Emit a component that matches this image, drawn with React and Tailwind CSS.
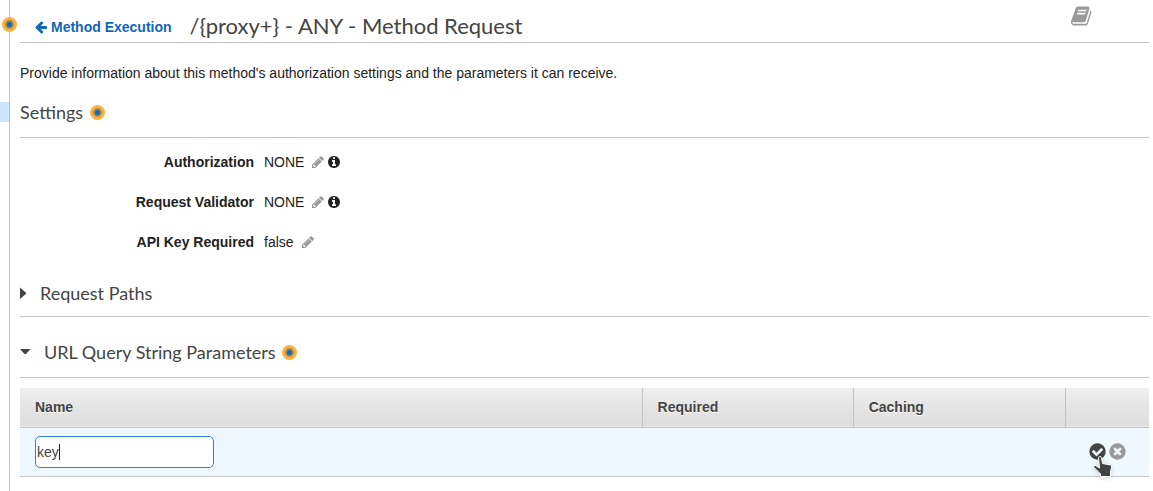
import { useState } from "react";

const DISC = "q0 209-103 385.5t-279.5 279.5-385.5 103-385.5-103-279.5-279.5-103-385.5 103-385.5 279.5-279.5 385.5-103 385.5 103 279.5 279.5 103 385.5z";

const ICONS = {
  arrowLeft: "M1664 896v128q0 53-32.5 90.5t-84.5 37.5h-704l293 294q38 36 38 90t-38 90l-75 76q-37 37-90 37-52 0-91-37l-651-652q-37-37-37-90 0-52 37-91l651-650q38-38 91-38 52 0 90 38l75 74q38 38 38 91t-38 91l-293 293h704q52 0 84.5 37.5t32.5 90.5z",
  book: "M1639 478q40 57 18 129l-275 906q-19 64-76.5 107.5t-122.5 43.5h-923q-77 0-148.5-53.5t-99.5-131.5q-24-67-2-127 0-4 3-27t4-37q1-8-3-21.5t-3-19.5q2-11 8-21t16.5-23.5 16.5-23.5q23-38 45-91.5t30-91.5q3-10 .5-30t-.5-28q3-11 17-28t17-23q21-36 42-92t25-90q1-9-2.5-32t.5-28q4-13 22-30.5t22-22.5q19-26 42.5-84.5t27.5-96.5q1-8-3-25.5t-2-26.5q2-8 9-18t18-23 17-21q8-12 16.5-30.5t15-35 16-36 19.5-32 26.5-23.5 36-11.5 47.5 5.5l-1 3q38-9 51-9h761q74 0 114 56t18 130l-274 906q-36 119-71.5 153.5t-128.5 34.5h-869q-27 0-38 15-11 16-1 43 24 70 144 70h923q29 0 56-15.5t35-41.5l300-987q7-22 5-57 38 15 59 43zm-1064 2q-4 13 2 22.5t20 9.5h608q13 0 25.5-9.5t16.5-22.5l21-64q4-13-2-22.5t-20-9.5h-608q-13 0-25.5 9.5t-16.5 22.5zm-83 256q-4 13 2 22.5t20 9.5h608q13 0 25.5-9.5t16.5-22.5l21-64q4-13-2-22.5t-20-9.5h-608q-13 0-25.5 9.5t-16.5 22.5z",
  pencil: "M491 1536l91-91-235-235-91 91v107h128v128h107zm523-928q0-22-22-22-10 0-17 7l-542 542q-7 7-7 17 0 22 22 22 10 0 17-7l542-542q7-7 7-17zm-54-192l416 416-832 832h-416v-416zm683 96q0 53-37 90l-166 166-416-416 166-165q36-38 90-38 53 0 91 38l235 234q37 39 37 91z",
  info: `M1152 1376v-160q0-14-9-23t-23-9h-96v-512q0-14-9-23t-23-9h-320q-14 0-23 9t-9 23v160q0 14 9 23t23 9h96v320h-96q-14 0-23 9t-9 23v160q0 14 9 23t23 9h448q14 0 23-9t9-23zm-128-896v-160q0-14-9-23t-23-9h-192q-14 0-23 9t-9 23v160q0 14 9 23t23 9h192q14 0 23-9t9-23zm640 416${DISC}`,
  check: `M1412 734q0-28-18-46l-91-90q-19-19-45-19t-45 19l-408 407-226-226q-19-19-45-19t-45 19l-91 90q-18 18-18 46 0 27 18 45l362 362q19 19 45 19 27 0 46-19l543-543q18-18 18-45zm252 162${DISC}`,
  times: `M1277 1122q0-26-19-45l-181-181 181-181q19-19 19-45 0-27-19-46l-90-90q-19-19-46-19-26 0-45 19l-181 181-181-181q-19-19-45-19-27 0-46 19l-90 90q-19 19-19 46 0 26 19 45l181 181-181 181q-19 19-19 45 0 27 19 46l90 90q19 19 46 19 26 0 45-19l181-181 181 181q19 19 45 19 27 0 46-19l90-90q19-19 19-46zm387-226${DISC}`,
};

const Icon = ({ name, className }) => (
  <svg viewBox="0 0 1792 1792" fill="currentColor" className={className} aria-hidden="true">
    <path d={ICONS[name]} />
  </svg>
);

// pulsing help dot
const Beacon = () => (
  <svg viewBox="0 0 16 16" className="block size-4" aria-hidden="true">
    <circle cx="8.5" cy="8.5" r="7.5" fill="#fbb040" />
    <circle cx="8.5" cy="8.5" r="4.4" fill="#a08a4e" />
    <circle cx="8.5" cy="8.5" r="2.5" fill="#1166bb" />
  </svg>
);

const Caret = ({ open }) => (
  <svg viewBox="0 0 12 12" className="size-3 shrink-0" fill="currentColor" aria-hidden="true">
    {open ? <path d="M0 3h10.500L6.500 7.500Q5.300 9 4 7.500z" /> : <path d="M0 .5v11.500L5.500 7.200Q6.500 6.200 5.500 5.300z" />}
  </svg>
);

const settings = [
  { label: "Authorization", value: "NONE", info: true },
  { label: "Request Validator", value: "NONE", info: true },
  { label: "API Key Required", value: "false", info: false },
];

const SettingRow = ({ label, value, info }) => (
  <div className="flex h-10 items-center">
    <dt className="w-[234px] text-right font-bold">{label}</dt>
    <dd className="ml-[10px] flex items-center">
      {value}
      <button className="ml-[7px] text-[#999999]" aria-label={`Edit ${label}`}>
        <Icon name="pencil" className="size-[14px]" />
      </button>
      {info && (
        <button className="ml-[2px]" aria-label={`About ${label}`}>
          <Icon name="info" className="size-[14px]" />
        </button>
      )}
    </dd>
  </div>
);

const ParamsTable = () => {
  const [name, setName] = useState("key");

  return (
    <table className="mt-[10px] w-full table-fixed border-collapse">
      <thead>
        <tr className="h-[39px] border-b border-[#c4c4c4] bg-linear-to-b from-[#eeeeee] to-[#dddddd] text-left text-[#444444] [text-shadow:0_1px_0_#fff]">
          <th className="w-[55.1%] pl-[15px]">Name</th>
          <th className="w-[18.7%] border-l border-[#c4c4c4] pl-[15px]">Required</th>
          <th className="w-[18.8%] border-l border-[#c4c4c4] pl-[15px]">Caching</th>
          <th className="border-l border-[#c4c4c4]"></th>
        </tr>
      </thead>
      <tbody>
        <tr className="h-[49px] border-b border-[#c4c4c4] bg-[#f0f8ff]">
          <td className="pl-[15px]">
            <div className="relative w-[179px]">
              <input
                type="text"
                aria-label="Parameter name"
                value={name}
                onChange={(e) => setName(e.target.value)}
                className="block h-8 w-full rounded-[5px] border border-[#2f80d8] bg-white px-px text-[#444444] outline-none"
              />
              {name === "key" && <span className="absolute top-2 left-6 h-4 w-px bg-[#222222]"></span>}
            </div>
          </td>
          <td></td>
          <td></td>
          <td>
            <div className="relative ml-[23px] flex gap-px">
              <button className="text-[#444444]" aria-label="Save">
                <Icon name="check" className="size-[19px]" />
              </button>
              <button className="text-[#999999]" aria-label="Cancel">
                <Icon name="times" className="size-[19px]" />
              </button>
              <svg viewBox="0 0 22 24" className="absolute top-[14px] left-1 h-6 w-[22px] drop-shadow-sm" aria-hidden="true">
                <path
                  d="M6.500 1.500Q7 .5 8 .5T9.500 1.500L10.500 7.500 18.500 9Q20 9.500 19.500 11.500L18.500 16V20.500H8.500V18L2 11.500Q1 9.500 3 9.200L7.500 12z"
                  fill="#444444"
                  stroke="#fff"
                />
              </svg>
            </div>
          </td>
        </tr>
      </tbody>
    </table>
  );
};

const App = () => {
  return (
    <div className="flex min-h-screen bg-white font-['Liberation_Sans',Arial,sans-serif] text-[14px] leading-5 text-[#222222]">
      <aside className="relative w-[10px] shrink-0 border-r border-[#c4c4c4] pt-[102px]">
        <div className="h-5 bg-[#cce4ff]"></div>
        <span className="absolute top-4 left-px">
          <Beacon />
        </span>
      </aside>

      <main className="min-w-0 flex-1 pr-1 pl-[10px]">
        <header className="flex h-[43px] items-center border-b border-[#c4c4c4] pt-[11px] pl-[14px]">
          <a href="#" className="flex items-center gap-[3px] font-bold text-[#1166bb]">
            <Icon name="arrowLeft" className="size-[14px]" />
            Method Execution
          </a>
          <h1 className="ml-[18px] pb-[2px] font-[Lato,sans-serif] text-[22px] leading-7 text-[#444444]">
            /{"{proxy+}"} - ANY - Method Request
          </h1>
          <button className="mr-14 mb-[22px] ml-auto text-[#999999]" aria-label="Documentation">
            <Icon name="book" className="size-[22px]" />
          </button>
        </header>

        <p className="mt-5">
          Provide information about this method's authorization settings and the parameters it can receive.
        </p>

        <section>
          <h2 className="mt-4 flex h-[39px] items-start gap-[6px] border-b border-[#c4c4c4] pt-px font-[Lato,sans-serif] text-[18px] leading-6 text-[#444444]">
            Settings
            <span className="pt-1">
              <Beacon />
            </span>
          </h2>
          <dl className="mt-1">
            {settings.map((row) => (
              <SettingRow key={row.label} {...row} />
            ))}
          </dl>
        </section>

        <section>
          <h2 className="mt-[19px] border-b border-[#c4c4c4] pb-[11px] font-[Lato,sans-serif] text-[18px] leading-6 text-[#444444]">
            <button className="flex items-center gap-2" aria-expanded="false">
              <Caret />
              Request Paths
            </button>
          </h2>
        </section>

        <section>
          <h2 className="mt-[23px] flex items-center gap-[5px] border-b border-[#c4c4c4] pb-[13px] font-[Lato,sans-serif] text-[18px] leading-6 text-[#444444]">
            <button className="flex items-center gap-3" aria-expanded="true">
              <Caret open />
              URL Query String Parameters
            </button>
            <Beacon />
          </h2>
          <ParamsTable />
        </section>
      </main>
    </div>
  );
};

export default App;
